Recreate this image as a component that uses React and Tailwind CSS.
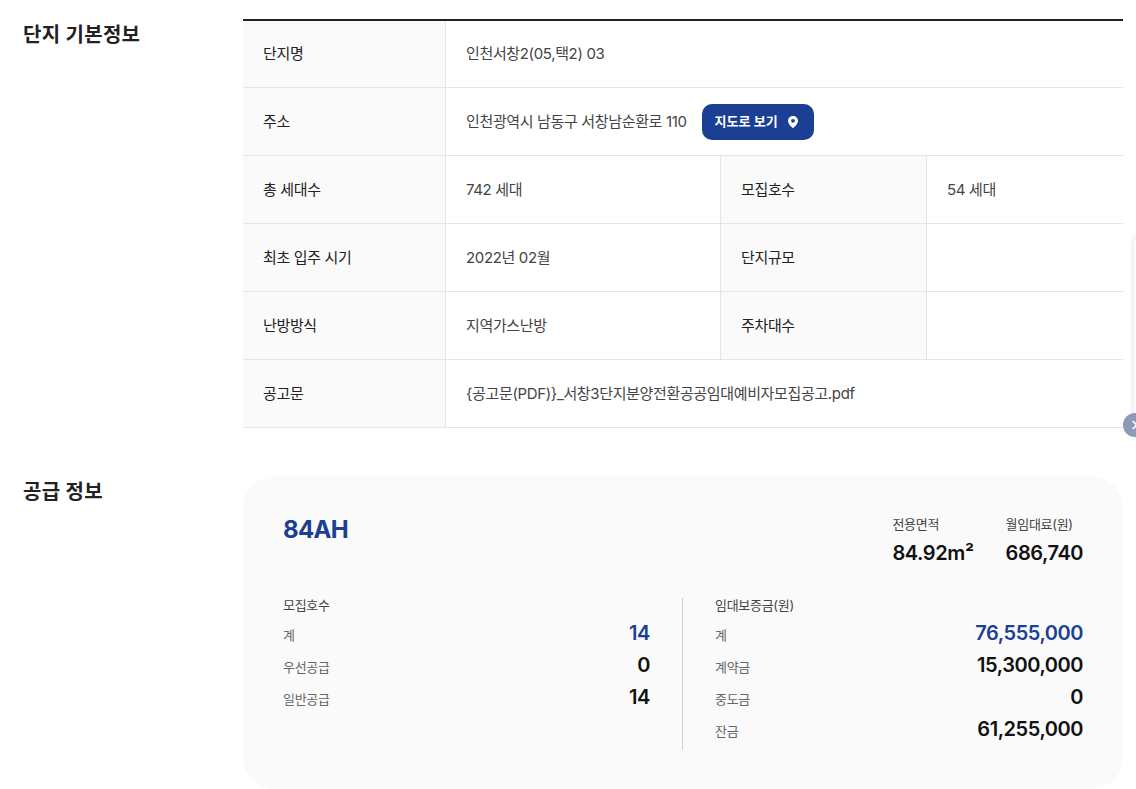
import { ChevronRight } from 'lucide-react'

const FONT = "font-['Inter','Noto_Sans_CJK_KR',sans-serif]"

function Th({ children, bordered }) {
  return (
    <div className={`bg-[#fafafa] flex items-center pl-5 text-[15px] tracking-[-0.35px] text-[#222] border-r border-[#e5e5e5] ${bordered ? 'border-l' : ''}`}>
      {children}
    </div>
  )
}

function Td({ children, wide }) {
  return (
    <div className={`flex items-center pl-5 text-[15px] tracking-[-0.35px] text-[#444] ${wide ? 'col-span-3' : ''}`}>
      {children}
    </div>
  )
}

function Row({ children, first }) {
  return (
    <div className={`grid grid-cols-[203px_274px_207px_1fr] border-b border-[#e5e5e5] ${first ? 'h-[67px]' : 'h-[68px] [&>div]:pt-[2px]'}`}>
      {children}
    </div>
  )
}

function PinIcon() {
  return (
    <svg width="12" height="14" viewBox="0 0 12 14" fill="none">
      <path fillRule="evenodd" clipRule="evenodd" d="M6 1C3.200 1 1 3.100 1 5.800c0 3 3 6 5 7.400 2-1.400 5-4.400 5-7.400C11 3.100 8.800 1 6 1Zm0 6.700a1.900 1.900 0 1 1 0-3.800 1.900 1.900 0 0 1 0 3.800Z" fill="white" />
    </svg>
  )
}

function Stat({ label, value, blue }) {
  return (
    <div className="flex items-center justify-between h-[32px]">
      <span className="mt-[2px] text-[13px] tracking-[-0.3px] text-[#666]">{label}</span>
      <span className={`mb-[4px] text-[20px] font-semibold tracking-[-0.45px] leading-[28px] ${blue ? 'text-[#1b3f94]' : 'text-[#111]'}`}>{value}</span>
    </div>
  )
}

export default function App() {
  return (
    <div className={`${FONT} relative h-[789px] overflow-hidden bg-white pl-[23px] pr-[13px]`}>
      {/* 단지 기본정보 */}
      <section className="flex pt-[19px]">
        <h2 className="w-[220px] pt-[1px] text-[20px] leading-[30px] font-semibold tracking-[0.25px] text-[#222]">단지 기본정보</h2>
        <div className="flex-1 border-t-2 border-[#222]">
          <Row first>
            <Th>단지명</Th>
            <Td wide>인천서창2(05,택2) 03</Td>
          </Row>
          <Row>
            <Th>주소</Th>
            <Td wide>
              인천광역시 남동구 서창남순환로 110
              <button className="ml-[15px] -mt-[2px] flex items-center pl-[13px] gap-[9px] w-[112px] h-[36px] rounded-[10px] bg-[#1b3f94] text-white text-[13px] font-semibold tracking-normal">
                지도로 보기
                <PinIcon />
              </button>
            </Td>
          </Row>
          <Row>
            <Th>총 세대수</Th>
            <Td>742 세대</Td>
            <Th bordered>모집호수</Th>
            <Td>54 세대</Td>
          </Row>
          <Row>
            <Th>최초 입주 시기</Th>
            <Td>2022년 02월</Td>
            <Th bordered>단지규모</Th>
            <Td />
          </Row>
          <Row>
            <Th>난방방식</Th>
            <Td>지역가스난방</Td>
            <Th bordered>주차대수</Th>
            <Td />
          </Row>
          <Row>
            <Th>공고문</Th>
            <Td wide>{'{공고문(PDF)}_서창3단지분양전환공공임대예비자모집공고.pdf'}</Td>
          </Row>
        </div>
      </section>

      {/* 공급 정보 */}
      <section className="flex mt-[48px]">
        <h2 className="w-[220px] pt-[1px] text-[20px] leading-[30px] font-semibold tracking-[0.25px] text-[#222]">공급 정보</h2>
        <div className="flex-1 h-[313px] rounded-[32px] bg-[#fafafa] px-10 pt-[38px]">
          <div className="flex justify-between h-[84px]">
            <div className="text-[24px] leading-[32px] font-bold tracking-[-0.7px] text-[#1b3f94]">84AH</div>
            <div className="flex gap-8">
              <div>
                <div className="text-[13px] leading-[20px] tracking-[-0.3px] text-[#444]">전용면적</div>
                <div className="mt-[5px] text-[20px] leading-[28px] font-semibold tracking-[-0.4px] text-[#111]">84.92m²</div>
              </div>
              <div>
                <div className="text-[13px] leading-[20px] tracking-[-0.3px] text-[#444]">월임대료(원)</div>
                <div className="mt-[5px] text-[20px] leading-[28px] font-semibold tracking-[-0.45px] text-[#111]">686,740</div>
              </div>
            </div>
          </div>
          <div className="grid grid-cols-2">
            <div className="pr-8 border-r border-[#d0d0d0] h-[152px]">
              <div className="text-[13px] leading-[14px] h-[21px] tracking-[-0.3px] text-[#444]">모집호수</div>
              <Stat label="계" value="14" blue />
              <Stat label="우선공급" value="0" />
              <Stat label="일반공급" value="14" />
            </div>
            <div className="pl-8">
              <div className="text-[13px] leading-[14px] h-[21px] tracking-[-0.3px] text-[#444]">임대보증금(원)</div>
              <Stat label="계" value="76,555,000" blue />
              <Stat label="계약금" value="15,300,000" />
              <Stat label="중도금" value="0" />
              <Stat label="잔금" value="61,255,000" />
            </div>
          </div>
        </div>
      </section>

      {/* 오른쪽 패널 */}
      <div className="absolute left-[1134px] top-[235px] w-[40px] h-[200px] rounded-tl-[8px] bg-white shadow-[0_0_6px_rgba(0,0,0,0.14)]" />
      <div className="absolute left-[1123px] top-[413px] w-[24px] h-[24px] rounded-full bg-[#8c9bb5] flex items-center pl-[5px] text-white">
        <ChevronRight size={14} strokeWidth={3} />
      </div>
    </div>
  )
}
